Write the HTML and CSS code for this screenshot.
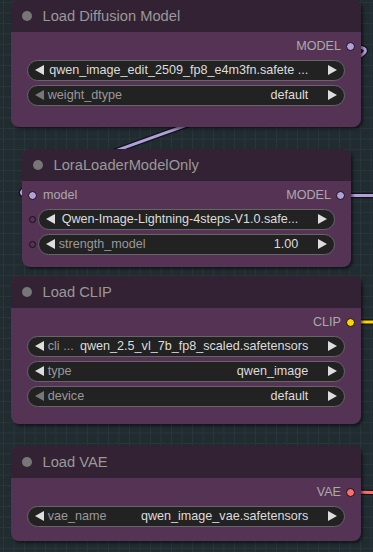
FILE: index.html
```html
<!DOCTYPE html>
<html>
<head>
<meta charset="utf-8">
<link rel="stylesheet" href="styles.css">
</head>
<body>
<div class="canvas">
  <svg class="links" width="373" height="552" viewBox="0 0 373 552">
    <g fill="none" stroke-linecap="round">
      <path class="edge" d="M350 46.5 C460 46.5 -58 195.5 32 195.5"/>
      <path d="M350 46.5 C460 46.5 -58 195.5 32 195.5" stroke="#B39DDB" stroke-width="3"/>
      <path class="edge" d="M340 195.5 L390 195.5"/>
      <path d="M340 195.5 L390 195.5" stroke="#B39DDB" stroke-width="3"/>
      <path class="edge" d="M351 322 L390 322"/>
      <path d="M351 322 L390 322" stroke="#FFD500" stroke-width="3"/>
      <path class="edge" d="M351 492 L390 493"/>
      <path d="M351 492 L390 493" stroke="#FF6E6E" stroke-width="3"/>
    </g>
  </svg>

  <div class="node n1">
    <div class="title"><span class="tdot"></span><span>Load Diffusion Model</span></div>
    <div class="body">
      <div class="slots">
        <div class="out"><span>MODEL</span><span class="dot model"></span></div>
      </div>
      <div class="widgets">
        <div class="wrow">
          <div class="widget">
            <svg class="arr" viewBox="0 0 9 10"><path d="M9 0 L0 5 L9 10Z"/></svg>
            <span class="wvalue solo">qwen_image_edit_2509_fp8_e4m3fn.safete ...</span>
            <svg class="arr" viewBox="0 0 9 10"><path d="M0 0 L9 5 L0 10Z"/></svg>
          </div>
        </div>
        <div class="wrow">
          <div class="widget">
            <svg class="arr dim" viewBox="0 0 9 10"><path d="M9 0 L0 5 L9 10Z"/></svg>
            <span class="wlabel">weight_dtype</span>
            <span class="wvalue">default</span>
            <svg class="arr" viewBox="0 0 9 10"><path d="M0 0 L9 5 L0 10Z"/></svg>
          </div>
        </div>
      </div>
    </div>
  </div>

  <div class="node n2">
    <div class="title"><span class="tdot"></span><span>LoraLoaderModelOnly</span></div>
    <div class="body">
      <div class="slots">
        <div class="in"><span class="dot model"></span><span>model</span></div>
        <div class="out"><span>MODEL</span><span class="dot model"></span></div>
      </div>
      <div class="widgets">
        <div class="wrow has-input">
          <span class="ring"></span>
          <div class="widget">
            <svg class="arr" viewBox="0 0 9 10"><path d="M9 0 L0 5 L9 10Z"/></svg>
            <span class="wvalue solo">Qwen-Image-Lightning-4steps-V1.0.safe...</span>
            <svg class="arr" viewBox="0 0 9 10"><path d="M0 0 L9 5 L0 10Z"/></svg>
          </div>
        </div>
        <div class="wrow has-input">
          <span class="ring"></span>
          <div class="widget">
            <svg class="arr" viewBox="0 0 9 10"><path d="M9 0 L0 5 L9 10Z"/></svg>
            <span class="wlabel">strength_model</span>
            <span class="wvalue">1.00</span>
            <svg class="arr" viewBox="0 0 9 10"><path d="M0 0 L9 5 L0 10Z"/></svg>
          </div>
        </div>
      </div>
    </div>
  </div>

  <div class="node n3">
    <div class="title"><span class="tdot"></span><span>Load CLIP</span></div>
    <div class="body">
      <div class="slots">
        <div class="out"><span>CLIP</span><span class="dot clip"></span></div>
      </div>
      <div class="widgets">
        <div class="wrow">
          <div class="widget">
            <svg class="arr" viewBox="0 0 9 10"><path d="M9 0 L0 5 L9 10Z"/></svg>
            <span class="wlabel">cli ...</span>
            <span class="wvalue">qwen_2.5_vl_7b_fp8_scaled.safetensors</span>
            <svg class="arr" viewBox="0 0 9 10"><path d="M0 0 L9 5 L0 10Z"/></svg>
          </div>
        </div>
        <div class="wrow">
          <div class="widget">
            <svg class="arr" viewBox="0 0 9 10"><path d="M9 0 L0 5 L9 10Z"/></svg>
            <span class="wlabel">type</span>
            <span class="wvalue">qwen_image</span>
            <svg class="arr" viewBox="0 0 9 10"><path d="M0 0 L9 5 L0 10Z"/></svg>
          </div>
        </div>
        <div class="wrow">
          <div class="widget">
            <svg class="arr dim" viewBox="0 0 9 10"><path d="M9 0 L0 5 L9 10Z"/></svg>
            <span class="wlabel">device</span>
            <span class="wvalue">default</span>
            <svg class="arr" viewBox="0 0 9 10"><path d="M0 0 L9 5 L0 10Z"/></svg>
          </div>
        </div>
      </div>
    </div>
  </div>

  <div class="node n4">
    <div class="title"><span class="tdot"></span><span>Load VAE</span></div>
    <div class="body">
      <div class="slots">
        <div class="out"><span>VAE</span><span class="dot vae"></span></div>
      </div>
      <div class="widgets">
        <div class="wrow">
          <div class="widget">
            <svg class="arr" viewBox="0 0 9 10"><path d="M9 0 L0 5 L9 10Z"/></svg>
            <span class="wlabel">vae_name</span>
            <span class="wvalue">qwen_image_vae.safetensors</span>
            <svg class="arr" viewBox="0 0 9 10"><path d="M0 0 L9 5 L0 10Z"/></svg>
          </div>
        </div>
      </div>
    </div>
  </div>
</div>
</body>
</html>
```

FILE: styles.css
```css
html, body {
  margin: 0;
  padding: 0;
  background: #202b30;
}

.canvas {
  position: relative;
  width: 373px;
  height: 552px;
  overflow: hidden;
  font-family: "Liberation Sans", Arial, sans-serif;
  background-color: #212c31;
  background-image:
    linear-gradient(to right, #29353b 1px, transparent 1px),
    linear-gradient(to bottom, #29353b 1px, transparent 1px);
  background-size: 10.5px 10.5px;
  background-position: 3px 2px;
}

.links {
  position: absolute;
  left: 0;
  top: 0;
}

.links .edge {
  stroke: rgba(0, 0, 0, 0.55);
  stroke-width: 5.5;
}

.node {
  position: absolute;
  background: #553355;
  border-radius: 8px;
  box-shadow: 2px 2px 3px rgba(0, 0, 0, 0.5);
  display: flex;
  flex-direction: column;
  box-sizing: border-box;
}

.n1 { left: 11px; top: 0px; width: 350px; height: 127px; }
.n2 { left: 22px; top: 149px; width: 329px; height: 118px; }
.n3 { left: 11px; top: 276px; width: 350px; height: 148px; }
.n4 { left: 11px; top: 446px; width: 350px; height: 95px; }

.title {
  height: 31.5px;
  flex: none;
  display: flex;
  align-items: center;
  background: #332233;
  border-radius: 8px 8px 0 0;
  padding-left: 10.75px;
  font-size: 14.7px;
  color: #999;
  white-space: nowrap;
}

.tdot {
  width: 10px;
  height: 10px;
  border-radius: 50%;
  background: #777;
  margin-right: 10.75px;
  flex: none;
}

.body {
  padding-top: 4px;
  display: flex;
  flex-direction: column;
}

.slots {
  height: 21px;
  display: flex;
  align-items: center;
  padding: 0 6px;
  font-size: 12.6px;
  color: #aaa;
}

.in {
  display: flex;
  align-items: center;
  gap: 6px;
}

.out {
  margin-left: auto;
  display: flex;
  align-items: center;
  gap: 5px;
}

.dot {
  width: 9px;
  height: 9px;
  border-radius: 50%;
  box-sizing: border-box;
  border: 1px solid #111;
  flex: none;
}

.dot.model { background: #B39DDB; }
.dot.clip { background: #FFD500; }
.dot.vae { background: #FF6E6E; }

.widgets {
  margin-top: 3px;
  display: flex;
  flex-direction: column;
  gap: 4.2px;
}

.wrow {
  display: flex;
  align-items: center;
  padding: 0 15.75px;
}

.wrow.has-input {
  padding-left: 7px;
}

.ring {
  width: 7px;
  height: 7px;
  border-radius: 50%;
  box-sizing: border-box;
  border: 1px solid #111;
  margin-right: 1.75px;
  flex: none;
}

.widget {
  flex: 1;
  min-width: 0;
  height: 21px;
  box-sizing: border-box;
  border: 1px solid #666;
  border-radius: 10.5px;
  background: #222;
  display: flex;
  align-items: center;
  padding: 0 7px;
  font-size: 12.6px;
  white-space: nowrap;
  overflow: hidden;
}

.arr {
  width: 9px;
  height: 10px;
  flex: none;
  fill: #ddd;
}

.arr.dim {
  fill: #777;
}

.wlabel {
  margin-left: 4px;
  color: #999;
  flex: 1;
  min-width: 0;
}

.wvalue {
  color: #ddd;
  margin-right: 20px;
}

.wvalue.solo {
  margin-left: auto;
}
```
